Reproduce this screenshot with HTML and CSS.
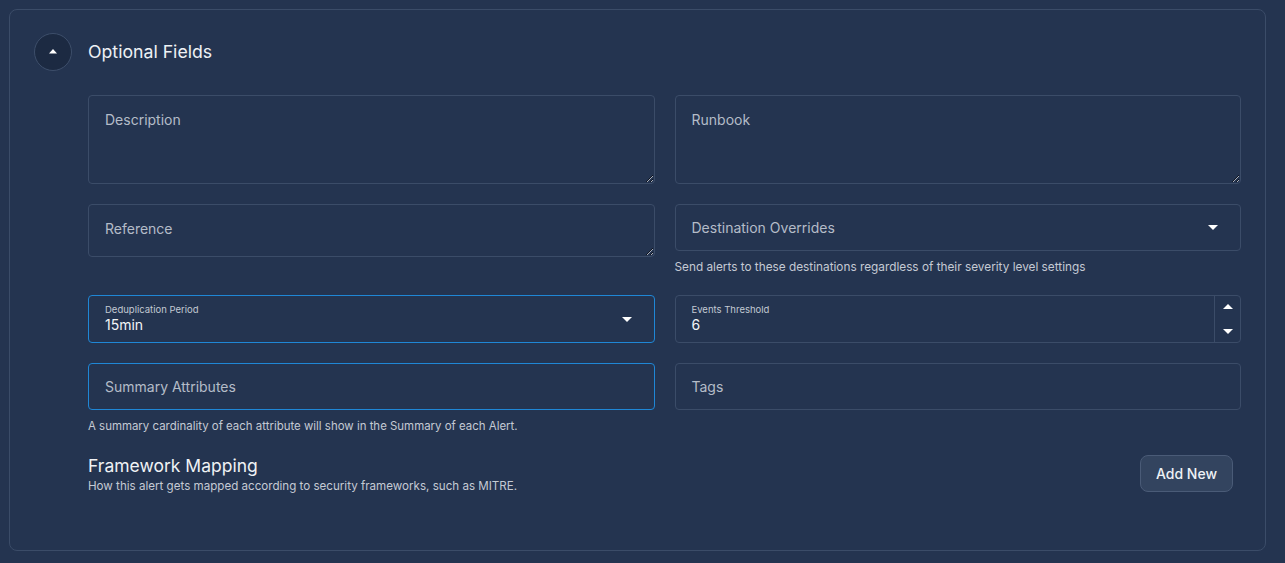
FILE: index.html
```html
<!DOCTYPE html>
<html lang="en">
<head>
<meta charset="utf-8">
<title>Optional Fields</title>
<link rel="stylesheet" href="styles.css">
</head>
<body>
<section class="panel">
  <div class="panel-header">
    <button class="toggle" type="button" aria-label="Collapse">
      <svg width="10" height="6" viewBox="0 0 10 6"><path d="M1 5.5 L5 1 L9 5.5 Z" fill="#ffffff"/></svg>
    </button>
    <h2 class="panel-title">Optional Fields</h2>
  </div>

  <div class="fields">
    <div class="cell">
      <textarea class="field textarea tall" placeholder="Description"></textarea>
    </div>
    <div class="cell">
      <textarea class="field textarea tall" placeholder="Runbook"></textarea>
    </div>

    <div class="cell">
      <textarea class="field textarea short" placeholder="Reference"></textarea>
    </div>
    <div class="cell">
      <div class="field select">
        <span class="placeholder">Destination Overrides</span>
        <svg class="caret" width="10" height="5" viewBox="0 0 10 5"><path d="M0 0 L10 0 L5 5 Z" fill="#ffffff"/></svg>
      </div>
      <p class="helper">Send alerts to these destinations regardless of their severity level settings</p>
    </div>

    <div class="cell">
      <div class="field select filled focused">
        <div class="stack">
          <span class="mini-label">Deduplication Period</span>
          <span class="value">15min</span>
        </div>
        <svg class="caret" width="10" height="5" viewBox="0 0 10 5"><path d="M0 0 L10 0 L5 5 Z" fill="#ffffff"/></svg>
      </div>
    </div>
    <div class="cell">
      <div class="field number filled">
        <div class="stack">
          <span class="mini-label">Events Threshold</span>
          <span class="value">6</span>
        </div>
        <div class="spinner">
          <svg width="10" height="5" viewBox="0 0 10 5"><path d="M0 5 L10 5 L5 0 Z" fill="#ffffff"/></svg>
          <svg width="10" height="5" viewBox="0 0 10 5"><path d="M0 0 L10 0 L5 5 Z" fill="#ffffff"/></svg>
        </div>
      </div>
    </div>

    <div class="cell">
      <div class="field input focused">
        <span class="placeholder">Summary Attributes</span>
      </div>
      <p class="helper summary-help">A summary cardinality of each attribute will show in the Summary of each Alert.</p>
    </div>
    <div class="cell">
      <div class="field input">
        <span class="placeholder">Tags</span>
      </div>
    </div>
  </div>

  <div class="framework">
    <div class="framework-text">
      <h3 class="framework-title">Framework Mapping</h3>
      <p class="framework-sub">How this alert gets mapped according to security frameworks, such as MITRE.</p>
    </div>
    <button class="btn" type="button">Add New</button>
  </div>
</section>
</body>
</html>
```

FILE: styles.css
```css
* { box-sizing: border-box; }

html, body {
  background: #243450;
}

body {
  margin: 0;
  padding: 9px 19px 13px 9px;
  font-family: Inter, "Noto Sans", sans-serif;
  color: #eef1f5;
}

.panel {
  border: 1px solid #3b4c68;
  border-radius: 8px;
  padding: 23px 24px 56px 24px;
  background: #243450;
}

.panel-header {
  display: flex;
  align-items: center;
  gap: 16px;
}

.toggle {
  width: 38px;
  height: 38px;
  border-radius: 50%;
  border: 1px solid #3d4e6a;
  background: #1c2a42;
  display: flex;
  align-items: center;
  justify-content: center;
  padding: 0 0 2px 0;
  margin: 0;
}

.panel-title {
  margin: 0;
  font-size: 17.7px;
  font-weight: 400;
  color: #eef1f5;
  line-height: 24px;
}

.fields {
  margin: 24px 0 0 54px;
  display: grid;
  grid-template-columns: 1fr 1fr;
  column-gap: 20px;
  row-gap: 20px;
}

.cell {
  display: flex;
  flex-direction: column;
}

.field {
  border: 1px solid #3b4c68;
  border-radius: 4px;
  background: #243450;
  color: #eef1f5;
  font-family: inherit;
  font-size: 14px;
  width: 100%;
}

.field.focused {
  border-color: #1f87d6;
}

.textarea {
  display: block;
  resize: vertical;
  padding: 15px 16px;
  line-height: 17px;
  outline: none;
  color-scheme: dark;
  margin: 0;
}

.textarea::placeholder {
  color: #b4bcc8;
  opacity: 1;
}

.tall { height: 89px; }
.short { height: 53px; }

.select {
  height: 47px;
  display: flex;
  align-items: center;
  justify-content: space-between;
  padding: 0 22px 0 16px;
}

.select.filled {
  height: 48px;
  padding-right: 22px;
}

.input {
  height: 47px;
  display: flex;
  align-items: center;
  padding: 0 16px;
}

.placeholder {
  color: #b4bcc8;
  font-size: 14px;
  line-height: 17px;
}

.stack {
  display: flex;
  flex-direction: column;
  padding-bottom: 1px;
}

.mini-label {
  font-size: 9.5px;
  line-height: 12px;
  color: #c2c9d3;
}

.value {
  font-size: 14px;
  line-height: 17px;
  color: #f2f4f7;
}

.number {
  height: 48px;
  display: flex;
  align-items: stretch;
  justify-content: space-between;
  padding: 0 0 0 16px;
}

.number .stack {
  justify-content: center;
}

.spinner {
  width: 26px;
  border-left: 1px solid #3b4c68;
  display: flex;
  flex-direction: column;
  align-items: center;
  justify-content: space-between;
  padding: 8px 0 8px;
}

.helper {
  margin: 8px 0 0;
  font-size: 11.8px;
  line-height: 16px;
  color: #c4cad4;
}

.helper.summary-help {
  font-size: 11.45px;
}

.framework {
  margin: 20px 0 0 54px;
  display: flex;
  justify-content: space-between;
  align-items: flex-start;
}

.framework-title {
  margin: 0;
  font-size: 17.5px;
  font-weight: 400;
  line-height: 24px;
  color: #f0f2f5;
}

.framework-sub {
  margin: 0;
  font-size: 11.6px;
  line-height: 16px;
  color: #c4cad4;
}

.btn {
  margin: 1px 8px 0 0;
  height: 37px;
  padding: 0 15px;
  border-radius: 8px;
  border: 1px solid #4a5b77;
  background: #33445f;
  color: #eef1f5;
  font-family: inherit;
  font-size: 14px;
  font-weight: 500;
}
```
